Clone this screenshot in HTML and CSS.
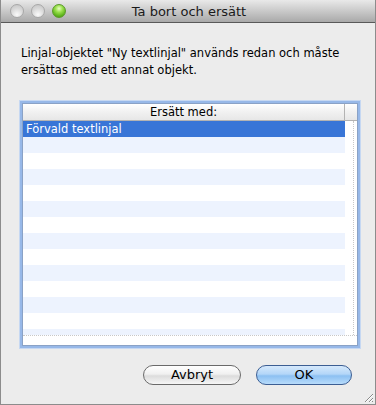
FILE: index.html
```html
<!DOCTYPE html>
<html>
<head>
<meta charset="utf-8">
<link rel="stylesheet" href="styles.css">
</head>
<body>
<div class="window">
  <div class="titlebar">
    <div class="lights">
      <span class="light"></span>
      <span class="light"></span>
      <span class="light green"></span>
    </div>
    <div class="title">Ta bort och ersätt</div>
  </div>

  <div class="content">
    <p class="message">Linjal-objektet "Ny textlinjal" används redan och måste ersättas med ett annat objekt.</p>

    <div class="table">
      <div class="table-head">
        <div class="head-cell">Ersätt med:</div>
        <div class="head-corner"></div>
      </div>
      <div class="table-body">
        <div class="rows">
          <div class="row selected">Förvald textlinjal</div>
          <div class="row"></div>
          <div class="row"></div>
          <div class="row"></div>
          <div class="row"></div>
          <div class="row"></div>
          <div class="row"></div>
          <div class="row"></div>
          <div class="row"></div>
          <div class="row"></div>
          <div class="row"></div>
          <div class="row"></div>
          <div class="row"></div>
          <div class="row"></div>
        </div>
        <div class="side"></div>
      </div>
      <div class="table-foot"></div>
    </div>

    <div class="buttons">
      <button class="btn">Avbryt</button>
      <button class="btn default">OK</button>
    </div>
  </div>

  <svg class="grip" width="12" height="12" viewBox="0 0 12 12">
    <path d="M11 3 L3 11 M11 7 L7 11 M11 10 L10 11" stroke="#8a8a8a" stroke-width="1"/>
    <path d="M11 4 L4 11 M11 8 L8 11" stroke="#fff" stroke-width="1"/>
  </svg>
</div>
</body>
</html>
```

FILE: styles.css
```css
body {
  margin: 0;
  background: #ececec;
  font-family: "DejaVu Sans", sans-serif;
}

.window {
  position: relative;
  width: 376px;
  height: 405px;
  box-sizing: border-box;
  border: 1px solid #8c8c8c;
  border-top: none;
  background: #ececec;
  display: flex;
  flex-direction: column;
}

.titlebar {
  position: relative;
  height: 22px;
  background: linear-gradient(#e9e9e9, #c9c9c9 50%, #a9a9a9);
  border-bottom: 1px solid #595959;
  display: flex;
  align-items: center;
  justify-content: center;
}

.lights {
  position: absolute;
  left: 9px;
  top: 4px;
  display: flex;
  gap: 7px;
}

.light {
  width: 14px;
  height: 14px;
  border-radius: 50%;
  box-sizing: border-box;
  border: 1px solid #a8a8a8;
  background: radial-gradient(circle at 50% 80%, #fafafa, #d8d8d8 55%, #c2c2c2);
}

.light.green {
  border-color: #5b9a2a;
  background: radial-gradient(circle at 50% 30%, #e8fdc4 0, #9ae04d 35%, #5fb51d 70%, #3f8d12);
}

.title {
  font-size: 13px;
  color: #1a1a1a;
  margin-left: 2px;
}

.content {
  flex: 1;
  padding: 22px 18px 0 20px;
}

.message {
  margin: 0;
  font-size: 11.5px;
  line-height: 17px;
  color: #000;
  width: 330px;
}

.table {
  margin-top: 24px;
  margin-left: 1px;
  width: 334px;
  border: 1px solid #8aa2c6;
  box-shadow: 0 0 0 2px #97b8e8, 0 0 0 3px #c6d8f2;
  background: #fff;
}

.table-head {
  display: flex;
  height: 16px;
  border-bottom: 1px solid #b3b3b3;
  background: linear-gradient(#ffffff, #f2f2f2 45%, #e7e7e7);
  font-size: 11.5px;
  line-height: 16px;
}

.head-cell {
  flex: 1;
  text-align: center;
  color: #000;
  border-right: 1px solid #b3b3b3;
}

.head-corner {
  width: 12px;
}

.table-body {
  display: flex;
  height: 214px;
  overflow: hidden;
}

.rows {
  flex: 1;
}

.row {
  height: 16px;
  font-size: 11.5px;
  line-height: 16px;
  padding-left: 3px;
  background: #fff;
}

.row:nth-child(even) {
  background: #edf3fe;
}

.row.selected {
  background: #3875d7;
  color: #fff;
}

.side {
  width: 8px;
  border-right: 1px dotted #c8c8c8;
  margin-right: 3px;
}

.table-foot {
  height: 9px;
  border-top: 1px dotted #c8c8c8;
  background: #fff;
}

.buttons {
  display: flex;
  justify-content: flex-end;
  gap: 15px;
  margin-top: 19px;
  margin-right: 5px;
}

.btn {
  height: 20px;
  border-radius: 10px;
  border: 1px solid #6a6a6a;
  background: linear-gradient(#ffffff, #f0f0f0 45%, #dcdcdc 55%, #f6f6f6);
  font-family: "DejaVu Sans", sans-serif;
  font-size: 13px;
  color: #000;
  padding: 0;
  line-height: 18px;
}

.btn:first-child {
  width: 98px;
}

.btn.default {
  width: 96px;
  border-color: #3c5e93;
  background: linear-gradient(#d6e9fc, #b3d6f8 45%, #8cc0f2 55%, #b8dcfb);
}

.grip {
  position: absolute;
  right: 1px;
  bottom: 1px;
}
```
